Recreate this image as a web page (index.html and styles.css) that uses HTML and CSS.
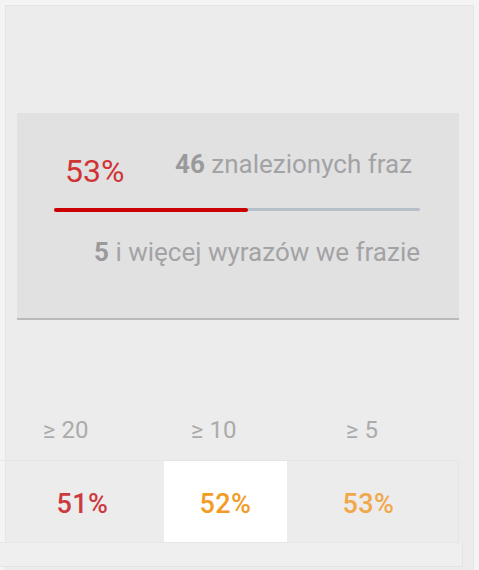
FILE: index.html
```html
<!DOCTYPE html>
<html lang="pl">
<head>
<meta charset="utf-8">
<link rel="stylesheet" href="styles.css">
</head>
<body>
<div class="panel">
  <section class="card">
    <div class="summary">
      <span class="score">53%</span>
      <span class="found"><b>46</b> znalezionych fraz</span>
    </div>
    <div class="bar"><div class="bar-fill" style="width:53%"></div></div>
    <div class="note"><b>5</b> i więcej wyrazów we frazie</div>
  </section>

  <div class="thresholds">
    <span>≥ 20</span>
    <span>≥ 10</span>
    <span>≥ 5</span>
  </div>
  <div class="values">
    <div class="cell red">51%</div>
    <div class="cell orange active">52%</div>
    <div class="cell amber">53%</div>
  </div>
  <div class="footer-strip"></div>
</div>
</body>
</html>
```

FILE: styles.css
```css
html, body {
  margin: 0;
  padding: 0;
}

body {
  background: #f4f4f4;
  font-family: Roboto, "Liberation Sans", sans-serif;
  width: 479px;
  height: 570px;
  overflow: hidden;
}

.panel {
  margin: 5px 5px 0 5px;
  border: 1px solid #e5e5e5;
  border-bottom: none;
  background: #ececec;
  height: 570px;
  padding-top: 107px;
  box-sizing: border-box;
}

.card {
  margin-left: 11px;
  width: 442px;
  height: 207px;
  background: #e1e1e1;
  border-bottom: 2px solid #bababa;
  padding: 0 39px 0 37px;
  box-sizing: border-box;
}

.summary {
  display: flex;
  align-items: flex-start;
  padding-top: 38px;
  height: 74px;
  box-sizing: border-box;
}

.score {
  width: 121px;
  padding-left: 11px;
  margin-top: 4px;
  box-sizing: border-box;
  color: #cf3434;
  font-size: 32px;
  line-height: 32px;
}

.found {
  color: #a3a3a6;
  font-size: 26px;
  line-height: 26px;
}

.found b,
.note b {
  color: #9a9a9c;
  font-weight: 700;
}

.bar {
  margin-top: 22px;
  height: 3px;
  background: #b7bfc8;
  border-radius: 2px;
}

.bar-fill {
  height: 4px;
  margin-top: -1px;
  background: #cc0000;
  border-radius: 2px;
}

.note {
  margin-top: 28px;
  text-align: right;
  color: #a3a3a6;
  font-size: 26px;
  line-height: 26px;
}

.thresholds {
  display: grid;
  grid-template-columns: 148px 155px auto;
  padding-left: 37px;
  margin-top: 100px;
  color: #ababab;
  font-size: 24px;
  line-height: 20px;
}

.values {
  margin-top: 20px;
  margin-left: -6px;
  width: 459px;
  height: 83px;
  box-sizing: border-box;
  border: 1px solid #e6e6e6;
  border-left: none;
  display: grid;
  grid-template-columns: 143px 143px 143px;
  padding-left: 11px;
}

.cell {
  margin: 0 10px;
  display: flex;
  align-items: center;
  justify-content: center;
  font-size: 27px;
  font-weight: 500;
  letter-spacing: 0.4px;
  padding-top: 4px;
}

.cell.active {
  background: #ffffff;
}

.red { color: #cb3a3f; }
.orange { color: #f29b26; }
.amber { color: #f1a84a; }

.footer-strip {
  margin-left: -6px;
  width: 463px;
  height: 24px;
  box-sizing: border-box;
  border: 1px solid #e4e4e4;
  border-left: none;
  border-top: none;
  background: #efefef;
}
```
